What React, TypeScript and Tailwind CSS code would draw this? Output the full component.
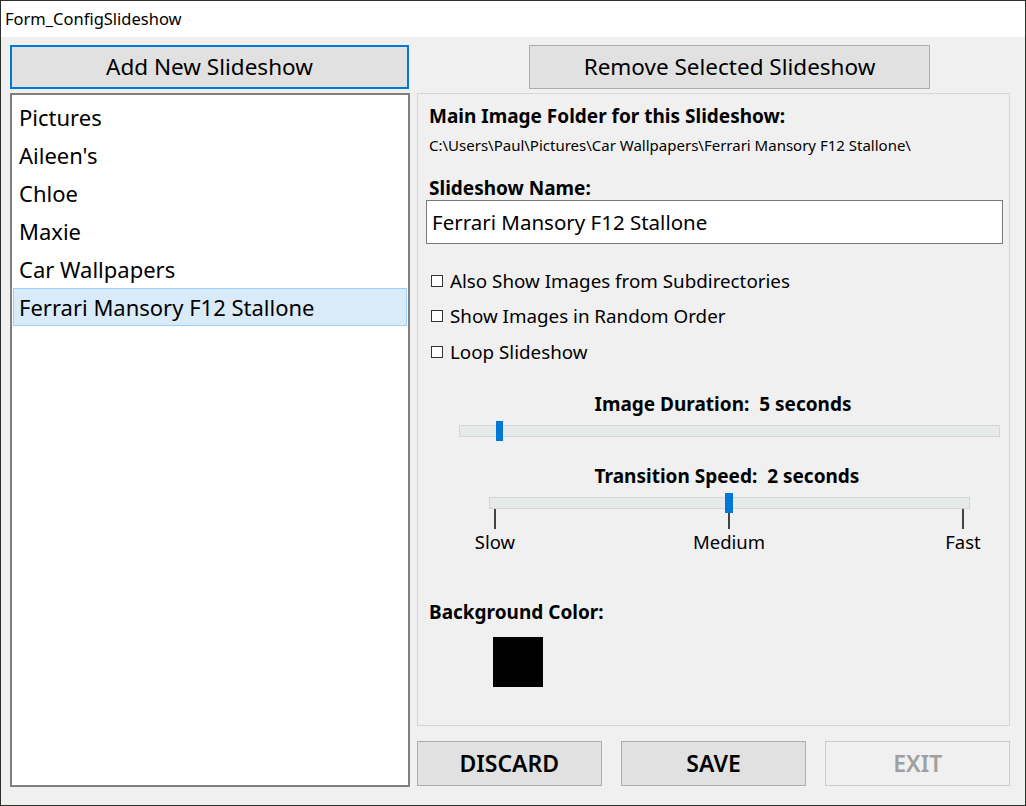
import React from 'react'

const font = { fontFamily: '"Noto Sans", "Open Sans", sans-serif' }

const slideshows = ['Pictures', "Aileen's", 'Chloe', 'Maxie', 'Car Wallpapers', 'Ferrari Mansory F12 Stallone']

function Checkbox({ label }: { label: string }) {
  return (
    <div className="flex items-center h-[35.5px] text-[18.8px] text-black">
      <span className="w-[12px] h-[12px] border border-[#333] bg-white mr-[7px] ml-[2px]" />
      {label}
    </div>
  )
}

export default function App() {
  return (
    <div className="w-[1026px] h-[806px] border border-[#2a302a] bg-[#f0f0f0] flex flex-col" style={font}>
      {/* Title bar */}
      <div className="h-[36px] bg-white flex items-center pl-[4px] text-[16.5px] text-black shrink-0">
        Form_ConfigSlideshow
      </div>

      <div className="flex flex-1">
        {/* Left column */}
        <div className="flex flex-col pl-[9px] pt-[8px] w-[408px] shrink-0">
          <button className="h-[44px] w-[399px] border-2 border-[#0078d7] bg-[#e1e1e1] text-[22.5px] text-black">
            Add New Slideshow
          </button>
          <div className="mt-[4px] w-[400px] h-[694px] border-2 border-[#808080] bg-white pt-[3px] px-[1px]">
            {slideshows.map((s, i) => (
              <div
                key={s}
                className={
                  i === slideshows.length - 1
                    ? 'h-[38px] flex items-center pl-[5px] text-[22px] text-black bg-[#d9ebf9] border border-[#99d1ff]'
                    : 'h-[38px] flex items-center pl-[5px] text-[22px] text-black border border-transparent'
                }
              >
                {s}
              </div>
            ))}
          </div>
        </div>

        {/* Right column */}
        <div className="flex flex-col pt-[8px] ml-[8px] w-[593px]">
          <button className="ml-[112px] h-[44px] w-[401px] border border-[#adadad] bg-[#e1e1e1] text-[22.5px] text-black">
            Remove Selected Slideshow
          </button>

          <div className="mt-[4px] h-[633px] border border-[#d6d6d6] flex flex-col pl-[11px] pr-[6px] pt-[9px]">
            <div className="text-[19px] font-bold leading-[26px] text-black">Main Image Folder for this Slideshow:</div>
            <div className="text-[15px] leading-[20px] mt-[6px] text-black">
              C:\Users\Paul\Pictures\Car Wallpapers\Ferrari Mansory F12 Stallone\
            </div>
            <div className="text-[19px] font-bold leading-[26px] mt-[20px] text-black">Slideshow Name:</div>
            <div className="-mt-[1px] -ml-[3px] w-[577px] h-[44px] border border-[#7a7a7a] bg-white flex items-center pl-[5px] text-[20.5px] text-black">
              Ferrari Mansory F12 Stallone
            </div>

            <div className="mt-[19px] flex flex-col">
              <Checkbox label="Also Show Images from Subdirectories" />
              <Checkbox label="Show Images in Random Order" />
              <Checkbox label="Loop Slideshow" />
            </div>

            {/* Image duration */}
            <div className="mt-[21px] flex flex-col">
              <div className="text-[19px] font-bold leading-[26px] text-black text-center pl-[14px]">
                Image Duration:&nbsp; 5 seconds
              </div>
              <div className="relative ml-[30px] mt-[8px] w-[541px] h-[12px] bg-[#e7eaea] border border-[#d6d6d6]">
                <div className="absolute left-[36px] -top-[5px] w-[7px] h-[20px] bg-[#0078d7]" />
              </div>
            </div>

            {/* Transition speed */}
            <div className="mt-[26px] flex flex-col">
              <div className="text-[19px] font-bold leading-[26px] text-black text-center pl-[22px]">
                Transition Speed:&nbsp; 2 seconds
              </div>
              <div className="relative ml-[60px] mt-[8px] w-[481px] h-[12px] bg-[#e7eaea] border border-[#d6d6d6]">
                <div className="absolute left-[235px] -top-[5px] w-[8px] h-[20px] bg-[#0078d7]" />
              </div>
              <div className="ml-[65px] w-[470px] flex justify-between">
                <div className="w-[2px] h-[20px] bg-[#444]" />
                <div className="w-[2px] h-[20px] bg-[#444]" />
                <div className="w-[2px] h-[20px] bg-[#444]" />
              </div>
              <div className="relative h-[28px] text-[18.5px] text-black">
                <span className="absolute left-[66px] -translate-x-1/2 -top-[1px]">Slow</span>
                <span className="absolute left-[300px] -translate-x-1/2 -top-[1px]">Medium</span>
                <span className="absolute left-[534px] -translate-x-1/2 -top-[1px]">Fast</span>
              </div>
            </div>

            <div className="mt-[42px] text-[19px] font-bold leading-[26px] text-black">Background Color:</div>
            <div className="mt-[12px] ml-[64px] w-[50px] h-[50px] bg-black" />
          </div>

          {/* Bottom buttons */}
          <div className="mt-[15px] flex gap-[19px]">
            <button className="w-[185px] h-[45px] border border-[#adadad] bg-[#e1e1e1] text-[23px] font-semibold text-black">
              DISCARD
            </button>
            <button className="w-[186px] h-[45px] border border-[#adadad] bg-[#e1e1e1] text-[23px] font-semibold text-black">
              SAVE
            </button>
            <button className="w-[185px] h-[45px] border border-[#cccccc] bg-[#f0f0f0] text-[23px] font-semibold text-[#a0a0a0]">
              EXIT
            </button>
          </div>
        </div>
      </div>
    </div>
  )
}
